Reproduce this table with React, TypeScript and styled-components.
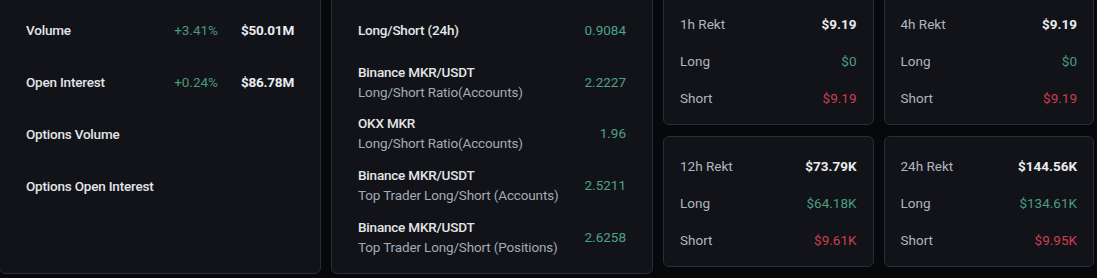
import React from "react";
import styled, { createGlobalStyle } from "styled-components";

const Global = createGlobalStyle`
  html, body { margin: 0; padding: 0; background: #07080b; overflow: hidden; }
  body { font-family: Roboto, "Noto Sans", "Liberation Sans", sans-serif; }
`;

const Page = styled.div`
  display: flex;
  align-items: flex-start;
  gap: 10px;
  margin: -6px 0 0 -1px;
  width: 1100px;
`;

const Panel = styled.div`
  width: 322px;
  height: 280px;
  box-sizing: border-box;
  background: #111318;
  border: 1px solid #2a2d34;
  border-radius: 6px;
  padding: 9px 26px 10px;
  display: flex;
  flex-direction: column;
`;

const Row = styled.div`
  height: 52px;
  display: flex;
  align-items: center;
  gap: 12px;
`;

const Label = styled.div`
  flex: 1;
  font-size: 13.5px;
  font-weight: 500;
  letter-spacing: -0.2px;
  color: #e3e5e8;
  line-height: 20px;
`;

const SubLabel = styled.div`
  font-size: 13.5px;
  font-weight: 400;
  letter-spacing: -0.15px;
  color: #a4aab3;
  line-height: 20px;
`;

const Change = styled.div`
  font-size: 13.5px;
  color: #4a9878;
  width: 60px;
  text-align: right;
`;

const Amount = styled.div`
  font-size: 13.5px;
  font-weight: 700;
  letter-spacing: -0.2px;
  color: #eaecef;
  width: 64px;
  text-align: right;
`;

const Ratio = styled.div`
  font-size: 13.5px;
  color: #4fa283;
  text-align: right;
`;

const Grid = styled.div`
  width: 431px;
  display: grid;
  grid-template-columns: 1fr 1fr;
  gap: 11px 10px;
`;

const Card = styled.div`
  box-sizing: border-box;
  height: 131px;
  background: #111318;
  border: 1px solid #2a2d34;
  border-radius: 6px;
  padding: 15px 16px 12px;
  display: flex;
  flex-direction: column;
  gap: 9px;
`;

const CardRow = styled.div`
  height: 28px;
  display: flex;
  align-items: center;
  justify-content: space-between;
  font-size: 13.5px;
`;

const CardLabel = styled.span`
  color: #b0b6bf;
`;

type Tone = "head" | "up" | "down";
const CardValue = styled.span<{ $tone: Tone }>`
  font-weight: ${(p) => (p.$tone === "head" ? 700 : 400)};
  color: ${(p) =>
    p.$tone === "head" ? "#eaecef" : p.$tone === "up" ? "#4a9e7f" : "#cf3d4f"};
`;

const overview = [
  { label: "Volume", change: "+3.41%", amount: "$50.01M" },
  { label: "Open Interest", change: "+0.24%", amount: "$86.78M" },
  { label: "Options Volume" },
  { label: "Options Open Interest" },
];

const ratios = [
  { title: "Long/Short (24h)", value: "0.9084" },
  { title: "Binance MKR/USDT", sub: "Long/Short Ratio(Accounts)", value: "2.2227" },
  { title: "OKX MKR", sub: "Long/Short Ratio(Accounts)", value: "1.96" },
  { title: "Binance MKR/USDT", sub: "Top Trader Long/Short (Accounts)", value: "2.5211" },
  { title: "Binance MKR/USDT", sub: "Top Trader Long/Short (Positions)", value: "2.6258" },
];

const rekt = [
  { period: "1h Rekt", total: "$9.19", long: "$0", short: "$9.19" },
  { period: "4h Rekt", total: "$9.19", long: "$0", short: "$9.19" },
  { period: "12h Rekt", total: "$73.79K", long: "$64.18K", short: "$9.61K" },
  { period: "24h Rekt", total: "$144.56K", long: "$134.61K", short: "$9.95K" },
];

export default function App() {
  return (
    <>
      <Global />
      <Page>
        <Panel>
          {overview.map((o) => (
            <Row key={o.label}>
              <Label>{o.label}</Label>
              {o.change && <Change>{o.change}</Change>}
              {o.amount && <Amount>{o.amount}</Amount>}
            </Row>
          ))}
        </Panel>
        <Panel>
          {ratios.map((r, i) => (
            <Row key={i}>
              <Label>
                {r.title}
                {r.sub && <SubLabel>{r.sub}</SubLabel>}
              </Label>
              <Ratio>{r.value}</Ratio>
            </Row>
          ))}
        </Panel>
        <Grid>
          {rekt.map((c) => (
            <Card key={c.period}>
              <CardRow>
                <CardLabel>{c.period}</CardLabel>
                <CardValue $tone="head">{c.total}</CardValue>
              </CardRow>
              <CardRow>
                <CardLabel>Long</CardLabel>
                <CardValue $tone="up">{c.long}</CardValue>
              </CardRow>
              <CardRow>
                <CardLabel>Short</CardLabel>
                <CardValue $tone="down">{c.short}</CardValue>
              </CardRow>
            </Card>
          ))}
        </Grid>
      </Page>
    </>
  );
}
